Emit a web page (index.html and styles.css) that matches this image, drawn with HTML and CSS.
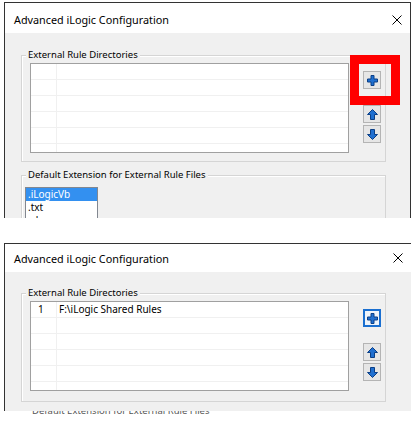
FILE: index.html
```html
<!DOCTYPE html>
<html lang="en">
<head>
    <meta charset="UTF-8">
    <title>Advanced iLogic Configuration</title>
    <link rel="stylesheet" href="styles.css">
</head>
<body>
    <!-- before: empty list, add button highlighted -->
    <div class="shot shot-before">
        <div class="window">
            <div class="titlebar">
                <span class="title">Advanced iLogic Configuration</span>
                <svg class="close" width="10" height="10" viewBox="0 0 10 10"><path d="M0.5 0.5 L9.5 9.5 M9.5 0.5 L0.5 9.5" stroke="#000" stroke-width="1"/></svg>
            </div>
            <div class="content">
                <div class="group">
                    <div class="group-label">External Rule Directories</div>
                    <div class="dirs">
                        <div class="list">
                            <div class="row"><span class="num"></span><span class="path"></span></div>
                            <div class="row"><span class="num"></span><span class="path"></span></div>
                            <div class="row"><span class="num"></span><span class="path"></span></div>
                            <div class="row"><span class="num"></span><span class="path"></span></div>
                            <div class="row"><span class="num"></span><span class="path"></span></div>
                            <div class="row"><span class="num"></span><span class="path"></span></div>
                        </div>
                        <div class="tools">
                            <button class="tool tool-add">
                                <svg width="11" height="11" viewBox="0 0 11 11"><path d="M4 0.5 H7 V4 H10.5 V7 H7 V10.5 H4 V7 H0.5 V4 H4 Z" fill="#1f6fd0" stroke="#0b3f86" stroke-width="1"/></svg>
                                <span class="highlight"></span>
                            </button>
                            <button class="tool tool-up">
                                <svg width="11" height="11" viewBox="0 0 11 11"><path d="M5.5 0.5 L10.5 5.5 H7.5 V10.5 H3.5 V5.5 H0.5 Z" fill="#1f6fd0" stroke="#0b3f86" stroke-width="1"/></svg>
                            </button>
                            <button class="tool tool-down">
                                <svg width="11" height="11" viewBox="0 0 11 11"><path d="M5.5 10.5 L10.5 5.5 H7.5 V0.5 H3.5 V5.5 H0.5 Z" fill="#1f6fd0" stroke="#0b3f86" stroke-width="1"/></svg>
                            </button>
                        </div>
                    </div>
                </div>
                <div class="group group-ext">
                    <div class="group-label">Default Extension for External Rule Files</div>
                    <div class="ext-list">
                        <div class="ext-item selected">.iLogicVb</div>
                        <div class="ext-item">.txt</div>
                        <div class="ext-item">.vb</div>
                    </div>
                </div>
            </div>
        </div>
    </div>

    <!-- after: one directory added -->
    <div class="shot shot-after">
        <div class="window">
            <div class="titlebar">
                <span class="title">Advanced iLogic Configuration</span>
                <svg class="close" width="10" height="10" viewBox="0 0 10 10"><path d="M0.5 0.5 L9.5 9.5 M9.5 0.5 L0.5 9.5" stroke="#000" stroke-width="1"/></svg>
            </div>
            <div class="content">
                <div class="group">
                    <div class="group-label">External Rule Directories</div>
                    <div class="dirs">
                        <div class="list">
                            <div class="row"><span class="num">1</span><span class="path">F:\iLogic Shared Rules</span></div>
                            <div class="row"><span class="num"></span><span class="path"></span></div>
                            <div class="row"><span class="num"></span><span class="path"></span></div>
                            <div class="row"><span class="num"></span><span class="path"></span></div>
                            <div class="row"><span class="num"></span><span class="path"></span></div>
                            <div class="row"><span class="num"></span><span class="path"></span></div>
                        </div>
                        <div class="tools">
                            <button class="tool tool-add focused">
                                <svg width="11" height="11" viewBox="0 0 11 11"><path d="M4 0.5 H7 V4 H10.5 V7 H7 V10.5 H4 V7 H0.5 V4 H4 Z" fill="#1f6fd0" stroke="#0b3f86" stroke-width="1"/></svg>
                            </button>
                            <button class="tool tool-up">
                                <svg width="11" height="11" viewBox="0 0 11 11"><path d="M5.5 0.5 L10.5 5.5 H7.5 V10.5 H3.5 V5.5 H0.5 Z" fill="#1f6fd0" stroke="#0b3f86" stroke-width="1"/></svg>
                            </button>
                            <button class="tool tool-down">
                                <svg width="11" height="11" viewBox="0 0 11 11"><path d="M5.5 10.5 L10.5 5.5 H7.5 V0.5 H3.5 V5.5 H0.5 Z" fill="#1f6fd0" stroke="#0b3f86" stroke-width="1"/></svg>
                            </button>
                        </div>
                    </div>
                </div>
            </div>
        </div>
        <div class="cut"><span>Default Extension for External Rule Files</span></div>
    </div>
</body>
</html>
```

FILE: styles.css
```css
body {
    margin: 0;
    background: #fff;
    font-family: "Noto Sans", "Open Sans", sans-serif;
    color: #000;
}
.shot-before {
    padding: 2px 0 0 4px;
    height: 243px;
    box-sizing: border-box;
}
.window {
    width: 407px;
    border: 1px solid #333;
    border-bottom: none;
    box-sizing: border-box;
    background: #f0f0f0;
    overflow: hidden;
}
.shot-before .window {
    height: 216px;
}
.shot-after {
    padding-left: 4px;
}
.shot-after .window {
    height: 168px;
    border-right: none;
}
.titlebar {
    display: flex;
    align-items: center;
    justify-content: space-between;
    height: 28px;
    padding: 0 8px 0 9px;
    background: #fff;
}
.shot-before .titlebar {
    height: 30px;
    padding-top: 3px;
    box-sizing: border-box;
}
.title {
    font-size: 10.8px;
}
.content {
    padding: 0 0 0 16px;
}
.group {
    width: 365px;
    box-sizing: border-box;
    margin-top: 22px;
    border: 1px solid #d5d5d5;
    box-shadow: inset 1px 1px 0 #fff;
    padding: 0 3px 8px 8px;
}
.shot-after .group {
    margin-top: 21px;
    padding-bottom: 10px;
}
.group-label {
    display: table;
    margin: -7px 0 0 -4px;
    padding: 0 2px;
    background: #f0f0f0;
    font-size: 9.5px;
    line-height: 12px;
}
.dirs {
    display: flex;
    gap: 14px;
    margin-top: 2px;
}
.list {
    width: 319px;
    height: 90px;
    box-sizing: border-box;
    border: 1px solid #a0a0a0;
    background: #fff;
    overflow: hidden;
}
.row {
    display: flex;
    height: 16px;
    border-bottom: 1px solid #f0f0f0;
    box-sizing: border-box;
    font-size: 10px;
    line-height: 15px;
}
.num {
    width: 26px;
    border-right: 1px solid #f0f0f0;
    padding-left: 7px;
    box-sizing: border-box;
}
.path {
    padding-left: 2px;
}
.tools {
    display: flex;
    flex-direction: column;
    padding-top: 8px;
}
.tool {
    position: relative;
    display: flex;
    align-items: center;
    justify-content: center;
    width: 18px;
    height: 18px;
    padding: 0;
    border: 1px solid #b4b4b4;
    background: #e6e6e6;
}
.tool-up {
    margin-top: 16px;
}
.tool-down {
    margin-top: 2px;
}
.tool.focused {
    border: 2px solid #1a6fd0;
    background: #eef4fb;
}
.highlight {
    position: absolute;
    left: -14px;
    top: -17px;
    width: 50px;
    height: 50px;
    box-sizing: border-box;
    border: 9px solid #f00;
}
.group-ext {
    margin-top: 13px;
    padding: 0 3px 20px 3px;
}
.group-ext .group-label {
    margin-left: 1px;
}
.ext-list {
    width: 71px;
    margin-top: 6px;
    border: 1px solid #828790;
    background: #fff;
}
.ext-item {
    height: 13px;
    padding-left: 2px;
    font-size: 10px;
    line-height: 13px;
}
.ext-item.selected {
    background: #3390f0;
    color: #fff;
}
.cut {
    height: 6px;
    overflow: hidden;
    padding-left: 28px;
    font-size: 9.5px;
    color: #555;
}
.cut span {
    display: block;
    line-height: 12px;
    margin-top: -6px;
}
```
